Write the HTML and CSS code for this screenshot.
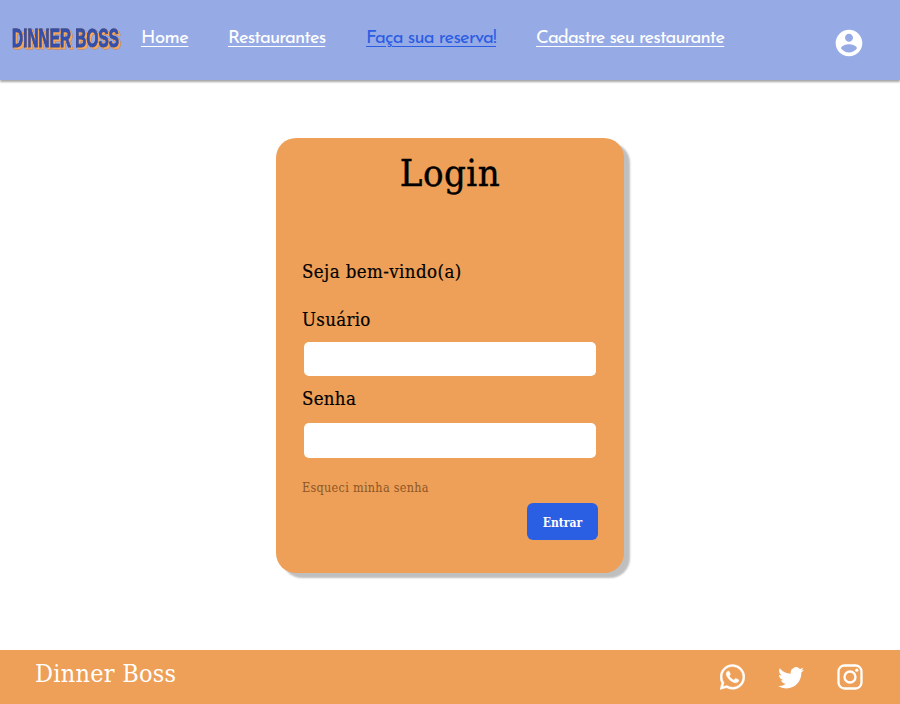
FILE: index.html
```html
<!DOCTYPE html>
<html lang="pt-BR">
<head>
<meta charset="utf-8">
<title>Dinner Boss</title>
<link rel="stylesheet" href="styles.css">
</head>
<body>
<header class="header">
  <svg class="logo" width="114" height="32" viewBox="0 0 114 32" role="img" aria-label="Dinner Boss">
    <text class="logo-word" x="2" y="22" textLength="107" lengthAdjust="spacingAndGlyphs">DINNER BOSS</text>
  </svg>
  <nav class="nav">
    <a class="home" href="#">Home</a>
    <a class="restaurants" href="#">Restaurantes</a>
    <a class="reserve" href="#">Faça sua reserva!</a>
    <a class="register" href="#">Cadastre seu restaurante</a>
  </nav>
  <svg class="account" width="32" height="32" viewBox="0 0 24 24" fill="#fff"><path d="M12 2C6.48 2 2 6.48 2 12s4.480 10 10 10 10-4.480 10-10S17.520 2 12 2zm0 3c1.660 0 3 1.340 3 3s-1.340 3-3 3-3-1.340-3-3 1.340-3 3-3zm0 14.200c-2.500 0-4.710-1.280-6-3.220.03-1.990 4-3.080 6-3.080s5.970 1.090 6 3.080c-1.290 1.940-3.500 3.220-6 3.220z"/></svg>
</header>
<main class="main">
  <form class="card">
    <h1>Login</h1>
    <p class="welcome">Seja bem-vindo(a)</p>
    <label class="user" for="user">Usuário</label>
    <input id="user" type="text">
    <label class="pass" for="pass">Senha</label>
    <input id="pass" type="password">
    <a class="forgot" href="#">Esqueci minha senha</a>
    <button type="button">Entrar</button>
  </form>
</main>
<footer class="footer">
  <span class="brand">Dinner Boss</span>
  <div class="social">
    <svg width="25" height="26" viewBox="0 0 16 16" fill="#fff" stroke="#fff" stroke-width=".25"><path d="M13.601 2.326A7.854 7.854 0 0 0 7.994 0C3.627 0 .068 3.558.064 7.926c0 1.399.366 2.760 1.057 3.965L0 16l4.204-1.102a7.933 7.933 0 0 0 3.790.965h.004c4.368 0 7.926-3.558 7.930-7.930A7.898 7.898 0 0 0 13.600 2.326zM7.994 14.521a6.573 6.573 0 0 1-3.356-.92l-.24-.144-2.494.654.666-2.433-.156-.251a6.560 6.560 0 0 1-1.007-3.505c0-3.626 2.957-6.584 6.591-6.584a6.560 6.560 0 0 1 4.660 1.931 6.557 6.557 0 0 1 1.928 4.660c-.004 3.639-2.961 6.592-6.592 6.592z"/><path d="M11.600 9.580c-.197-.099-1.170-.578-1.353-.646-.182-.065-.315-.099-.445.099-.133.197-.513.646-.627.775-.114.133-.232.148-.430.050-.197-.100-.836-.308-1.592-.985-.59-.525-.985-1.175-1.103-1.372-.114-.198-.011-.304.088-.403.087-.088.197-.232.296-.346.100-.114.133-.198.198-.330.065-.134.034-.248-.015-.347-.05-.099-.445-1.076-.612-1.470-.160-.389-.323-.335-.445-.340-.114-.007-.247-.007-.380-.007a.729.729 0 0 0-.529.247c-.182.198-.691.677-.691 1.654 0 .977.710 1.916.810 2.049.098.133 1.394 2.132 3.383 2.992.47.205.840.326 1.129.418.475.152.904.129 1.246.080.380-.058 1.171-.480 1.338-.943.164-.464.164-.860.114-.943-.049-.084-.182-.133-.380-.232z"/></svg>
    <svg width="26" height="26" viewBox="0 0 16 16" fill="#fff"><path d="M5.026 15c6.038 0 9.341-5.003 9.341-9.334 0-.14 0-.282-.006-.422A6.685 6.685 0 0 0 16 3.542a6.658 6.658 0 0 1-1.889.518 3.301 3.301 0 0 0 1.447-1.817 6.533 6.533 0 0 1-2.087.793A3.286 3.286 0 0 0 7.875 6.030a9.325 9.325 0 0 1-6.767-3.429 3.289 3.289 0 0 0 1.018 4.382A3.323 3.323 0 0 1 .64 6.575v.045a3.288 3.288 0 0 0 2.632 3.218 3.203 3.203 0 0 1-.865.115 3.230 3.230 0 0 1-.614-.057 3.283 3.283 0 0 0 3.067 2.277A6.588 6.588 0 0 1 .78 13.580a6.320 6.320 0 0 1-.78-.045A9.344 9.344 0 0 0 5.026 15z"/></svg>
    <svg width="26" height="26" viewBox="0 0 26 26" fill="none" stroke="#fff" stroke-width="2.300"><rect x="1.500" y="1.500" width="23" height="23" rx="6"/><circle cx="13" cy="13" r="5.500"/><circle cx="19.800" cy="6.200" r="1.600" fill="#fff" stroke="none"/></svg>
  </div>
</footer>
</body>
</html>
```
FILE: styles.css
```css
* { box-sizing: border-box; }
body {
  margin: 0;
  min-height: 704px;
  display: flex;
  flex-direction: column;
  background: #fff;
  font-family: "Roboto Slab", "DejaVu Serif Condensed", "DejaVu Serif", serif;
  font-stretch: condensed;
}
.header {
  height: 80px;
  display: flex;
  align-items: flex-start;
  padding: 25px 35px 0 10px;
  background: #96abe6;
  box-shadow: 0 2px 2px rgba(0, 0, 0, .35);
}
.logo { flex: none; }
.logo-word {
  font: bold 25px "Liberation Sans Narrow", "Liberation Sans", sans-serif;
  fill: #3050b4;
  stroke: #3d4c92;
  stroke-width: .8px;
  filter: drop-shadow(1px 1px 0 #f5a75c) drop-shadow(1px 1px 0 #f5a75c) drop-shadow(.6px .6px 0 #654f62);
}
.nav {
  display: flex;
  margin-left: 17px;
  font: 18.500px/24px "Josefin Sans", Lato, sans-serif;
  letter-spacing: -.920px;
  padding-top: 2px;
}
.nav a {
  color: #fff;
  white-space: nowrap;
  text-decoration: underline;
  text-decoration-thickness: 1px;
  text-underline-offset: 3px;
}
.nav .home { width: 87px; letter-spacing: -.500px; }
.nav .restaurants { width: 138px; }
.nav .reserve { width: 170px; color: #2b5de3; letter-spacing: -.820px; }
.account { margin: 2px 0 0 auto; flex: none; }
.main { flex: 1; padding-top: 58px; }
.card {
  width: 348px;
  height: 435px;
  margin: 0 0 0 276px;
  padding: 0 26px;
  display: flex;
  flex-direction: column;
  border-radius: 20px;
  background: #eea058;
  box-shadow: 6px 5px 2px #bfbfbf;
}
h1 {
  margin: 10px 0 0;
  font-size: 38px;
  line-height: 50px;
  font-weight: 400;
  letter-spacing: .5px;
  text-align: center;
  -webkit-text-stroke: .4px #000;
}
.welcome { margin: 61px 0 0; font-size: 18.500px; line-height: 26px; letter-spacing: .420px; }
label { font-size: 18.500px; line-height: 26px; letter-spacing: .300px; }
.welcome, label { -webkit-text-stroke: .2px #000; }
.user { margin-top: 22px; }
.pass { margin-top: 10px; }
input {
  width: 292px;
  height: 34px;
  margin: 9px 0 0 2px;
  border: 0;
  border-radius: 5px;
  background: #fff;
}
#pass { margin-top: 11px; height: 35px; }
.forgot {
  margin-top: 21px;
  font-size: 12.500px;
  line-height: 18px;
  letter-spacing: .300px;
  color: #8c5626;
  text-decoration: none;
}
button {
  width: 71px;
  height: 37px;
  margin: 6px 0 0 auto;
  padding: 2px 0 0;
  border: 0;
  border-radius: 6px;
  background: #2b5fe3;
  color: #fff;
  font: bold 12px "Roboto Slab", "DejaVu Serif Condensed", "DejaVu Serif", serif;
  font-stretch: condensed;
}
.footer {
  height: 54px;
  display: flex;
  justify-content: space-between;
  padding: 0 37px 0 35px;
  background: #eea058;
}
.brand { font-size: 25px; line-height: 48px; letter-spacing: .250px; color: #fff; }
.social { display: flex; gap: 33px; padding-top: 14px; }
```
